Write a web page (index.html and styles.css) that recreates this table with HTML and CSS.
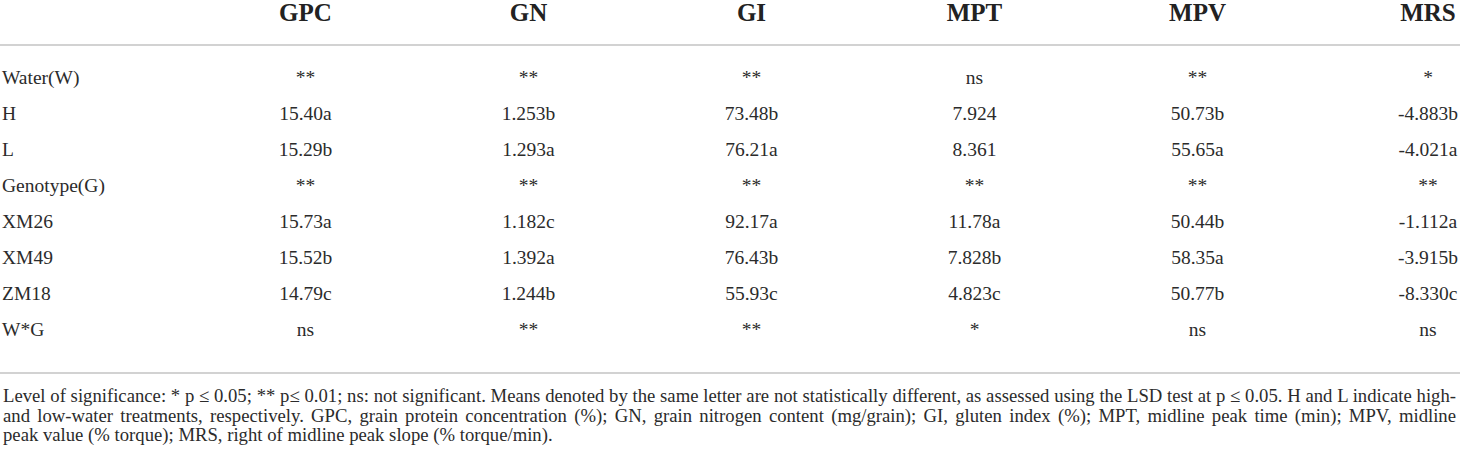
FILE: index.html
```html
<!DOCTYPE html>
<html lang="en">
<head>
  <meta charset="UTF-8" />
  <title>Table</title>
  <link rel="stylesheet" href="styles.css">
</head>
<body>
  <div class="table">
    <div class="row head">
      <div></div>
      <div>GPC</div>
      <div>GN</div>
      <div>GI</div>
      <div>MPT</div>
      <div>MPV</div>
      <div>MRS</div>
    </div>
    <div class="body">
      <div class="row">
        <div>Water(W)</div><div>**</div><div>**</div><div>**</div><div>ns</div><div>**</div><div>*</div>
      </div>
      <div class="row">
        <div>H</div><div>15.40a</div><div>1.253b</div><div>73.48b</div><div>7.924</div><div>50.73b</div><div>-4.883b</div>
      </div>
      <div class="row">
        <div>L</div><div>15.29b</div><div>1.293a</div><div>76.21a</div><div>8.361</div><div>55.65a</div><div>-4.021a</div>
      </div>
      <div class="row">
        <div>Genotype(G)</div><div>**</div><div>**</div><div>**</div><div>**</div><div>**</div><div>**</div>
      </div>
      <div class="row">
        <div>XM26</div><div>15.73a</div><div>1.182c</div><div>92.17a</div><div>11.78a</div><div>50.44b</div><div>-1.112a</div>
      </div>
      <div class="row">
        <div>XM49</div><div>15.52b</div><div>1.392a</div><div>76.43b</div><div>7.828b</div><div>58.35a</div><div>-3.915b</div>
      </div>
      <div class="row">
        <div>ZM18</div><div>14.79c</div><div>1.244b</div><div>55.93c</div><div>4.823c</div><div>50.77b</div><div>-8.330c</div>
      </div>
      <div class="row">
        <div>W*G</div><div>ns</div><div>**</div><div>**</div><div>*</div><div>ns</div><div>ns</div>
      </div>
    </div>
  </div>
  <p class="note">
    <span class="line full">Level of significance: * p ≤ 0.05; ** p≤ 0.01; ns: not significant. Means denoted by the same letter are not statistically different, as assessed using the LSD test at p ≤ 0.05. H and L indicate high-</span>
    <span class="line full">and low-water treatments, respectively. GPC, grain protein concentration (%); GN, grain nitrogen content (mg/grain); GI, gluten index (%); MPT, midline peak time (min); MPV, midline</span>
    <span class="line">peak value (% torque); MRS, right of midline peak slope (% torque/min).</span>
  </p>
</body>
</html>
```

FILE: styles.css
```css
* {
  box-sizing: border-box;
}

body {
  margin: 0;
  background: #fff;
  color: #2b2b2b;
  font-family: "Liberation Serif", "Times New Roman", serif;
  width: 1460px;
}

.row {
  display: grid;
  grid-template-columns: 194px repeat(5, 223px) 1fr;
  height: 36px;
  line-height: 36px;
  font-size: 19.5px;
  white-space: nowrap;
}

.row > div {
  text-align: center;
}

.row > div:first-child {
  text-align: left;
  padding-left: 2px;
}

.row > div:last-child {
  padding-left: 87px;
}

.row.head {
  height: 46px;
  line-height: 26px;
  font-size: 25px;
  font-weight: bold;
  color: #222;
  border-bottom: 2px solid #d2d2d2;
}

.body {
  padding: 14px 0 24px;
  border-bottom: 2px solid #d2d2d2;
}

.note {
  margin: 0;
  padding: 12px 4px 0 3px;
  font-size: 18.7px;
  line-height: 19.5px;
}

.line {
  display: block;
  white-space: nowrap;
}

.line.full {
  text-align: justify;
  text-align-last: justify;
}
```
